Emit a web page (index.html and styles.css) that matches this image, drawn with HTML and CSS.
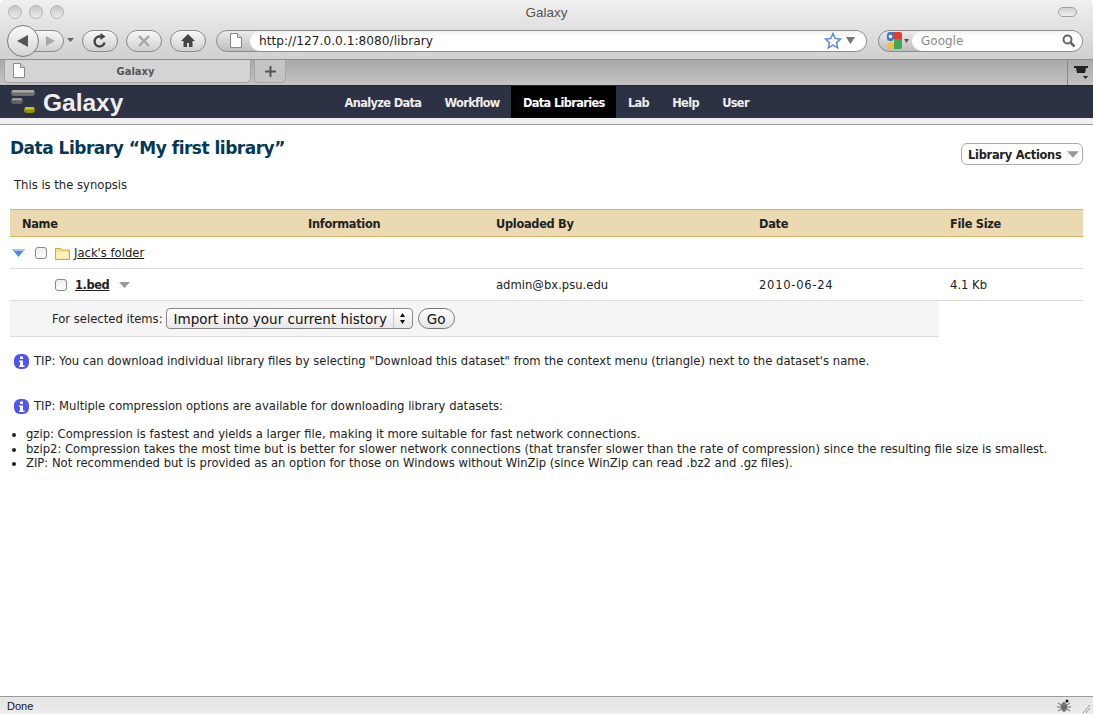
FILE: index.html
```html
<!DOCTYPE html>
<html lang="en">
<head>
<meta charset="utf-8">
<title>Galaxy</title>
<link rel="stylesheet" href="styles.css">
</head>
<body>
<div class="window">
  <div class="titlebar">
    <div class="lights"><span class="light"></span><span class="light"></span><span class="light"></span></div>
    <div class="wintitle">Galaxy</div>
    <div class="pillwrap"><span class="pill"></span></div>
  </div>
  <div class="toolbar">
    <div class="backfwd">
      <span class="fwd"><svg width="14" height="14" viewBox="0 0 14 14"><path d="M3 2l9 5-9 5z" fill="#a8a8a8"/></svg></span>
      <span class="back"><svg width="16" height="16" viewBox="0 0 16 16"><path d="M13 2v12L2 8z" fill="#555"/></svg></span>
    </div>
    <svg class="histarrow" width="8" height="5" viewBox="0 0 8 5"><path d="M0 0h7L3.500 4z" fill="#666"/></svg>
    <span class="tbtn"><svg width="16" height="16" viewBox="0 0 16 16"><path d="M12.500 9.500A5 5 0 1 1 8 3.500h1.500" fill="none" stroke="#444" stroke-width="2.400"/><path d="M8.500 0l5 3.500-5 3.500z" fill="#444"/></svg></span>
    <span class="tbtn"><svg width="14" height="14" viewBox="0 0 14 14"><path d="M2 2l10 10M12 2L2 12" stroke="#a6a6a6" stroke-width="2.400"/></svg></span>
    <span class="tbtn"><svg width="16" height="15" viewBox="0 0 16 15"><path d="M8 1L1 8h2.500v6h3.500v-4h2v4h3.500V8H15z" fill="#444"/></svg></span>
    <div class="urlbar">
      <span class="site"><svg width="12" height="15" viewBox="0 0 12 15"><path d="M.5.500h7l4 4v10H.5z" fill="#fff" stroke="#888"/><path d="M7.500.500v4h4" fill="#ddd" stroke="#888"/></svg></span>
      <span class="urlfield">
        <span class="urltext">http://127.0.0.1:8080/library</span>
        <svg width="18" height="17" viewBox="0 0 18 17"><path d="M9 1.500l2.300 5 5.200.6-3.900 3.500 1.100 5.200L9 13.200l-4.700 2.600 1.100-5.200L1.500 7.100l5.200-.6z" fill="#fff" stroke="#5b8bd8" stroke-width="1.500"/></svg>
        <svg class="urlarrow" width="9" height="7" viewBox="0 0 9 7"><path d="M0 0h9L4.500 7z" fill="#777"/></svg>
      </span>
    </div>
    <div class="searchbar">
      <span class="engine">
        <svg width="16" height="17" viewBox="0 0 16 17"><path d="M8 0H4a3 3 0 0 0-3 3v3a3 3 0 0 0 3 3h2l2-2z" fill="#3c78c8"/><path d="M8 0h6a2 2 0 0 1 2 2v5H8z" fill="#e03c32"/><path d="M8 7h8v8a2 2 0 0 1-2 2H8z" fill="#3fa858"/><circle cx="4.500" cy="13.500" r="3.500" fill="#f0c040"/><circle cx="4.500" cy="4.500" r="1.800" fill="#fff"/></svg>
        <svg width="5" height="4" viewBox="0 0 5 4"><path d="M0 0h5L2.500 4z" fill="#555"/></svg>
      </span>
      <span class="searchfield">
        <span class="searchtext">Google</span>
        <svg width="14" height="14" viewBox="0 0 14 14"><circle cx="5.500" cy="5.500" r="4" fill="none" stroke="#666" stroke-width="2"/><path d="M8.500 8.500l4 4" stroke="#666" stroke-width="2.500"/></svg>
      </span>
    </div>
  </div>
  <div class="tabbar">
    <div class="tab">
      <svg width="12" height="15" viewBox="0 0 12 15"><path d="M.5.500h7l4 4v10H.5z" fill="#fff" stroke="#888"/><path d="M7.500.500v4h4" fill="#ddd" stroke="#888"/></svg>
      <span class="tabtitle">Galaxy</span>
    </div>
    <div class="newtab"><svg width="11" height="11" viewBox="0 0 11 11"><path d="M5.500 0v11M0 5.500h11" stroke="#555" stroke-width="2"/></svg></div>
    <div class="tabspacer"></div>
    <div class="tablist"><svg width="15" height="15" viewBox="0 0 15 15"><path d="M0 1h14v2h-2L11 8H3L2 3H0z" fill="#222"/><path d="M9 11h5l-2.500 3z" fill="#222"/></svg></div>
  </div>

  <nav class="masthead">
    <div class="brand">
      <svg class="logo" width="26" height="27" viewBox="0 0 26 27">
        <rect x="0" y="1" width="24" height="6" rx="3" fill="#707070"/>
        <rect x="1" y="1" width="22" height="2.500" rx="1.200" fill="#a8a8a8"/>
        <rect x="0" y="9" width="12" height="6" rx="3" fill="#606060"/>
        <rect x="1" y="9" width="10" height="2.500" rx="1.200" fill="#999"/>
        <rect x="13" y="18" width="11" height="6" rx="3" fill="#8f8f10"/>
        <rect x="14" y="18" width="9" height="2.500" rx="1.200" fill="#c8c820"/>
      </svg>
      <span class="brandname">Galaxy</span>
    </div>
    <div class="navtabs">
      <a class="navtab">Analyze Data</a>
      <a class="navtab">Workflow</a>
      <a class="navtab active">Data Libraries</a>
      <a class="navtab">Lab</a>
      <a class="navtab">Help</a>
      <a class="navtab">User</a>
    </div>
  </nav>
  <div class="mastfoot"></div>

  <main class="page">
    <div class="pagehead">
      <h2 class="libtitle">Data Library “My first library”</h2>
      <button class="actions">Library Actions <svg class="actionarrow" width="13" height="7" viewBox="0 0 13 7"><path d="M0 0h13L6.500 7z" fill="#999"/></svg></button>
    </div>
    <p class="synopsis">This is the synopsis</p>

    <div class="grid head">
      <span>Name</span><span>Information</span><span>Uploaded By</span><span>Date</span><span>File Size</span>
    </div>
    <div class="grid row">
      <span class="namecell">
        <svg class="disclosure" width="13" height="8" viewBox="0 0 13 8"><path d="M0 0h13L6.500 8z" fill="#4a8ae0"/><path d="M0 0h13L11 2H2z" fill="#a6c8f0"/></svg>
        <span class="check"></span>
        <svg class="folder" width="15" height="13" viewBox="0 0 15 13"><path d="M.5 1.500h5l1 1.500h8v9.500H.5z" fill="#fbe08a" stroke="#d9a63a"/><path d="M1.500 5h12v6.500h-12z" fill="#fff2b8"/></svg>
        <a class="link">Jack's folder</a>
      </span>
      <span></span><span></span><span></span><span></span>
    </div>
    <div class="grid row">
      <span class="namecell nested">
        <span class="check"></span>
        <a class="link strong">1.bed</a>
        <svg class="menuarrow" width="11" height="6" viewBox="0 0 11 6"><path d="M0 0h11L5.500 6z" fill="#999"/></svg>
      </span>
      <span></span><span>admin@bx.psu.edu</span><span class="date">2010-06-24</span><span>4.1 Kb</span>
    </div>
    <div class="selected">
      <span>For selected items:</span>
      <span class="select"><span class="selecttext">Import into your current history</span><span class="stepper"><svg width="7" height="13" viewBox="0 0 7 13"><path d="M3.500 1L6 5H1zM3.500 12L1 8h5z" fill="#111"/></svg></span></span>
      <button class="go">Go</button>
    </div>

    <p class="tip first"><svg class="info" width="15" height="15" viewBox="0 0 15 15"><rect width="15" height="15" rx="6" fill="#4f55f2"/><rect x="6" y="2.500" width="3" height="2.500" fill="#fff"/><path d="M5 6.500h4v5h1.500v1.500h-5.500v-1.500H6V8H5z" fill="#fff"/></svg>TIP: You can download individual library files by selecting "Download this dataset" from the context menu (triangle) next to the dataset's name.</p>
    <p class="tip second"><svg class="info" width="15" height="15" viewBox="0 0 15 15"><rect width="15" height="15" rx="6" fill="#4f55f2"/><rect x="6" y="2.500" width="3" height="2.500" fill="#fff"/><path d="M5 6.500h4v5h1.500v1.500h-5.500v-1.500H6V8H5z" fill="#fff"/></svg>TIP: Multiple compression options are available for downloading library datasets:</p>
    <ul class="options">
      <li>gzip: Compression is fastest and yields a larger file, making it more suitable for fast network connections.</li>
      <li>bzip2: Compression takes the most time but is better for slower network connections (that transfer slower than the rate of compression) since the resulting file size is smallest.</li>
      <li>ZIP: Not recommended but is provided as an option for those on Windows without WinZip (since WinZip can read .bz2 and .gz files).</li>
    </ul>
  </main>

  <footer class="statusbar">
    <span>Done</span>
    <svg class="bug" width="34" height="16" viewBox="0 0 34 16"><ellipse cx="7" cy="9" rx="3" ry="5" fill="#777"/><circle cx="10" cy="3" r="1.500" fill="#111"/><path d="M1 5l12 8M1 13L13 5M0 9h14" stroke="#666"/><path d="M26 15l7-8M29 15l4-5" stroke="#999"/></svg>
  </footer>
</div>
</body>
</html>
```
FILE: styles.css
```css
* { box-sizing: border-box; }
html, body { margin: 0; height: 100%; }
body { font-family: "DejaVu Sans", sans-serif; font-size: 11.6px; color: #222; background: #fff; overflow: hidden; }
.window { display: flex; flex-direction: column; height: 714px; width: 1093px; }

.titlebar { height: 22px; flex: none; background: linear-gradient(#f0f0f0, #e4e4e4); display: grid; grid-template-columns: 1fr auto 1fr; align-items: center; padding: 2px 8px 0 8px; border-radius: 5px 5px 0 0; }
.lights { display: flex; gap: 7px; }
.light { width: 14px; height: 14px; border-radius: 50%; border: 1px solid #b4b4b4; background: linear-gradient(#c6c6c6, #ececec); }
.wintitle { font-family: "Liberation Sans", sans-serif; font-size: 13.500px; color: #555; }
.pillwrap { display: flex; justify-content: flex-end; padding-right: 8px; }
.pill { width: 19px; height: 10px; border-radius: 5px; border: 1px solid #a0a0a0; background: linear-gradient(#d0d0d0, #efefef); }

.toolbar { height: 38px; flex: none; background: linear-gradient(#e4e4e4, #d0d0d0); display: flex; align-items: center; padding: 0 10px 0 7px; border-bottom: 1px solid #8e8e8e; }
.backfwd { position: relative; width: 57px; height: 30px; display: flex; align-items: center; }
.back { position: absolute; left: 0; top: -1px; width: 32px; height: 32px; border-radius: 50%; border: 1px solid #7c7c7c; background: linear-gradient(#fbfbfb, #d4d4d4); display: flex; align-items: center; justify-content: center; }
.fwd { position: absolute; left: 24px; top: 4px; width: 33px; height: 22px; border-radius: 0 11px 11px 0; border: 1px solid #8c8c8c; background: linear-gradient(#f8f8f8, #cfcfcf); display: flex; align-items: center; justify-content: center; padding-left: 4px; }
.histarrow { margin: 0 7px 0 3px; }
.tbtn { width: 36px; height: 22px; border-radius: 11px; border: 1px solid #8c8c8c; background: linear-gradient(#f8f8f8, #cfcfcf); display: flex; align-items: center; justify-content: center; margin-right: 8px; }
.urlbar { width: 651px; height: 22px; margin-left: 2px; border-radius: 11px; border: 1px solid #8c8c8c; background: linear-gradient(#ececec, #bdbdbd); display: flex; }
.site { width: 33px; display: flex; align-items: center; justify-content: center; flex: none; padding-left: 4px; }
.urlfield { flex: 1; background: linear-gradient(#f2f2f2, #fff 30%); border-radius: 10px; display: flex; align-items: center; padding: 0 11px 0 9px; gap: 2px; }
.urltext { flex: 1; font-size: 12.200px; color: #222; }
.urlarrow { margin-left: 2px; }
.searchbar { width: 205px; height: 22px; margin-left: 11px; border-radius: 11px; border: 1px solid #8c8c8c; background: linear-gradient(#ececec, #bdbdbd); display: flex; }
.engine { width: 33px; display: flex; align-items: center; flex: none; padding-left: 7px; gap: 2px; }
.searchfield { flex: 1; background: linear-gradient(#f2f2f2, #fff 30%); border-radius: 10px; display: flex; align-items: center; justify-content: space-between; padding: 0 6px 0 9px; }
.searchtext { font-size: 12px; color: #8a8a8a; }

.tabbar { height: 25px; flex: none; background: linear-gradient(#a8a8a8, #c4c4c4); display: flex; align-items: flex-start; padding-left: 4px; }
.tab { width: 247px; height: 23px; background: #d4d4d4; border: 1px solid #a6a6a6; border-top: none; border-radius: 0 0 5px 5px; display: flex; align-items: center; padding: 0 8px 1px 8px; }
.tabtitle { flex: 1; text-align: center; font-size: 10px; font-weight: bold; color: #555; margin-left: 4px; padding-top: 2px; }
.newtab { width: 32px; height: 23px; margin-left: 3px; background: #c4c4c4; border: 1px solid #a6a6a6; border-top: none; border-radius: 0 0 5px 5px; display: flex; align-items: center; justify-content: center; }
.tabspacer { flex: 1; }
.tablist { width: 26px; height: 25px; border-left: 1px solid #888; display: flex; align-items: center; justify-content: center; padding-left: 2px; }

.masthead { height: 33px; flex: none; background: #2c3143; border-top: 1px solid #252525; display: flex; position: relative; }
.brand { width: 333px; display: flex; align-items: center; padding-left: 11px; gap: 6px; }
.logo { flex: none; margin-top: 1px; }
.brandname { font-family: "Liberation Sans", sans-serif; font-size: 24.500px; font-weight: bold; color: #eee; padding-top: 2px; }
.navtabs { display: flex; }
.navtab { display: flex; align-items: center; padding: 2px 11.600px 0; font-size: 11.400px; letter-spacing: -0.65px; font-weight: bold; color: #eee; }
.navtab.active { background: #000; color: #fff; }
.mastfoot { height: 7px; flex: none; background: #efefef; border-bottom: 1px solid #999; }

.page { flex: 1; padding: 0 10px; min-height: 0; }
.pagehead { display: flex; justify-content: space-between; align-items: flex-start; height: 47px; padding-top: 11px; }
.libtitle { margin: 0; font-size: 17px; letter-spacing: -0.5px; line-height: 24px; font-weight: bold; color: #023858; }
.actions { font: bold 11.400px "DejaVu Sans", sans-serif; letter-spacing: -0.25px; color: #222; height: 22px; width: 122px; margin-top: 7px; padding: 2px 0 0 6px; background: #fff; border: 1px solid #aaa; border-radius: 6px; white-space: nowrap; display: flex; align-items: center; gap: 5px; }
.actionarrow { flex: none; width: 12px; margin-top: -2px; }
.synopsis { margin: 0 0 0 4px; height: 37px; line-height: 26px; }

.grid { display: grid; grid-template-columns: 286px 188px 263px 191px 1fr; padding-left: 12px; align-items: center; }
.head { height: 28px; padding-top: 2px; background: #ebd9b2; border-top: 1px solid #d8b365; border-bottom: 1px solid #d8b365; font-weight: bold; font-size: 11.400px; letter-spacing: -0.3px; }
.row { height: 32px; border-bottom: 1px solid #ddd; }
.namecell { display: flex; align-items: center; margin-left: -10px; }
.nested { margin-left: 33px; }
.disclosure { margin-right: 10px; }
.check { width: 12px; height: 12px; border: 1px solid #888; border-radius: 3px; background: linear-gradient(#eee, #fff); flex: none; }
.folder { margin: 1px 4px 0 8px; }
.link { color: #222; text-decoration: underline; }
.strong { font-weight: bold; font-size: 11.400px; letter-spacing: -0.4px; margin-left: 8px; }
.menuarrow { margin-left: 10px; }
.date { letter-spacing: 0.7px; }
.selected { width: 929px; height: 36px; background: #f5f5f5; border-bottom: 1px solid #ddd; display: flex; align-items: center; padding-left: 42px; gap: 3px; }
.select { width: 247px; height: 21px; border: 1px solid #888; border-radius: 4px; background: linear-gradient(#fff, #e8e8e8); display: flex; align-items: center; font-size: 13.500px; color: #111; margin-right: 2px; }
.selecttext { flex: 1; padding-left: 7px; white-space: nowrap; overflow: hidden; }
.stepper { width: 19px; height: 19px; border-left: 1px solid #ccc; display: flex; align-items: center; justify-content: center; }
.go { font: 13.500px "DejaVu Sans", sans-serif; color: #111; width: 37px; height: 21px; padding: 0; border: 1px solid #777; border-radius: 11px; background: linear-gradient(#fff, #e4e4e4); }

.tip { margin: 0; display: flex; align-items: center; gap: 5px; padding-left: 4px; line-height: 15px; }
.info { flex: none; }
.first { margin-top: 17px; }
.second { margin-top: 30px; }
.options { margin: 13px 0 0; padding: 0 0 0 16px; line-height: 14.500px; }

.statusbar { height: 18px; flex: none; background: linear-gradient(#e4e4e4, #ececec); border-top: 1px solid #999; display: flex; align-items: center; justify-content: space-between; padding: 0 2px 0 7px; font-family: "Liberation Sans", sans-serif; font-size: 11px; color: #111; }
```
